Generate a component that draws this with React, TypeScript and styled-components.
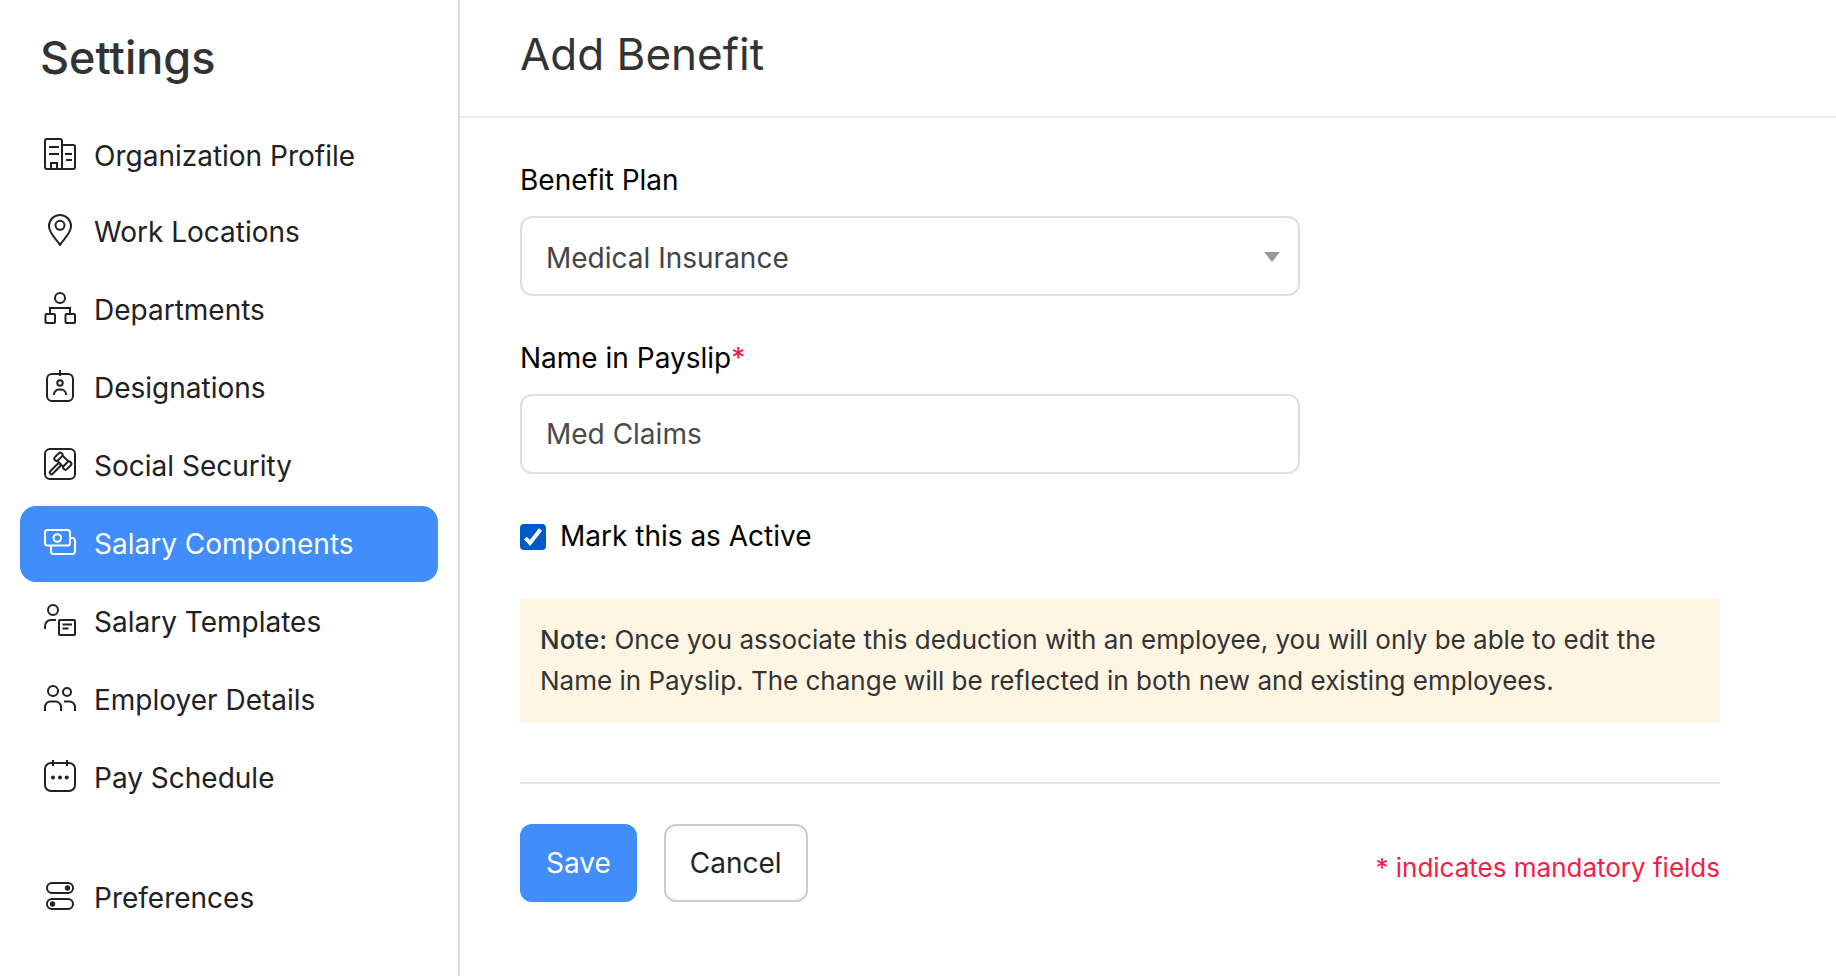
import React, { useState } from "react";
import styled, { createGlobalStyle } from "styled-components";

const GlobalStyle = createGlobalStyle`
  *, *::before, *::after { box-sizing: border-box; }
  body {
    margin: 0;
    background: #fff;
    color: #000;
    font-family: Inter, "Liberation Sans", sans-serif;
    font-size: 28px;
    line-height: 40px;
  }
  button, input, select { font: inherit; }
`;

const Page = styled.div`
  display: flex;
  min-height: 100vh;
`;

const Sidebar = styled.aside`
  flex: 0 0 460px;
  padding: 28px 20px 40px;
  border-right: 2px solid #dcdcdc;
`;

const SidebarTitle = styled.h1`
  margin: 0 0 30px;
  padding: 0 20px;
  color: #333;
  font-size: 45px;
  font-weight: 500;
  line-height: 60px;
`;

const NavList = styled.ul`
  margin: 0;
  padding: 0;
  list-style: none;
`;

const NavItem = styled.li<{ $separated?: boolean }>`
  margin-top: ${(p) => (p.$separated ? 44 : 2)}px;

  &:nth-child(-n + 2) {
    margin-top: 0;
  }
`;

const NavLink = styled.a<{ $active?: boolean }>`
  display: flex;
  align-items: center;
  gap: 18px;
  height: 76px;
  padding: 0 24px;
  border-radius: 16px;
  background: ${(p) => (p.$active ? "#408dfb" : "transparent")};
  color: ${(p) => (p.$active ? "#fff" : "#212121")};
  text-decoration: none;
`;

const Icon = styled.svg`
  flex: none;
  width: 32px;
  height: 32px;
  margin-bottom: 4px;
  fill: none;
  stroke: currentColor;
  stroke-width: 2;
`;

const Main = styled.main`
  flex: 1;
  min-width: 0;
`;

const Header = styled.header`
  padding: 24px 60px 32px;
  border-bottom: 2px solid #ebebeb;
`;

const PageTitle = styled.h2`
  margin: 0;
  color: #333;
  font-size: 44px;
  font-weight: 400;
  line-height: 60px;
`;

const Form = styled.form`
  max-width: 1320px;
  padding: 42px 60px;
`;

const Field = styled.div`
  max-width: 780px;
  margin-bottom: 42px;
`;

const Label = styled.label`
  display: block;
  margin-bottom: 16px;
`;

const Required = styled.span`
  color: #fb1b44;
`;

const SelectWrap = styled.div`
  position: relative;
`;

const Select = styled.select`
  display: block;
  width: 100%;
  height: 80px;
  padding: 4px 60px 0 24px;
  border: 2px solid #dfdfe6;
  border-radius: 12px;
  background: #fff;
  color: #444;
  appearance: none;
`;

const Caret = styled.svg`
  position: absolute;
  top: 36px;
  right: 20px;
  width: 16px;
  height: 10px;
  fill: #999;
  pointer-events: none;
`;

const TextInput = styled.input`
  display: block;
  width: 100%;
  height: 80px;
  padding: 0 24px;
  border: 2px solid #dfdfe6;
  border-radius: 12px;
  background: #fff;
  color: #4a4a4a;
`;

const CheckRow = styled.div`
  display: flex;
  align-items: center;
  gap: 14px;
  margin-bottom: 43px;
`;

const CheckWrap = styled.span`
  position: relative;
  width: 26px;
  height: 26px;
  margin-top: 2px;
`;

const Checkbox = styled.input`
  display: block;
  width: 26px;
  height: 26px;
  margin: 0;
  border: 2px solid #767676;
  border-radius: 4px;
  appearance: none;

  &:checked {
    border-color: #0059c9;
    background: #0059c9;
  }

  &:not(:checked) + svg {
    display: none;
  }
`;

const CheckMark = styled.svg`
  position: absolute;
  inset: 0;
  width: 26px;
  height: 26px;
  fill: none;
  stroke: #fff;
  stroke-width: 4;
  pointer-events: none;
`;

const Note = styled.p`
  margin: 0 0 60px;
  padding: 20px 20px 21px;
  background: #fff5e3;
  color: #333;
  font-size: 26px;
  line-height: 41px;

  strong {
    font-weight: 500;
  }
`;

const Footer = styled.div`
  display: flex;
  align-items: center;
  gap: 27px;
  padding-top: 40px;
  border-top: 2px solid #e5e5e5;
`;

const Button = styled.button<{ $primary?: boolean }>`
  height: 78px;
  padding: 0 24px;
  border: 2px solid ${(p) => (p.$primary ? "#408dfb" : "#ccc")};
  border-radius: 12px;
  background: ${(p) => (p.$primary ? "#408dfb" : "#fff")};
  color: ${(p) => (p.$primary ? "#fff" : "#212529")};
  cursor: pointer;
`;

const MandatoryHint = styled.span`
  margin-left: auto;
  padding-top: 10px;
  color: #fb1b44;
  font-size: 26px;
`;

type Item = { label: string; icon: React.ReactNode; separated?: boolean };

const items: Item[] = [
  {
    label: "Organization Profile",
    icon: (
      <path d="M18 31V3a2 2 0 0 0-2-2H3a2 2 0 0 0-2 2v26a2 2 0 0 0 2 2h26a2 2 0 0 0 2-2V9a2 2 0 0 0-2-2H18M5 9h10M5 16h10M21 16h7M22 22h6M7 31v-6h6v6" />
    ),
  },
  {
    label: "Work Locations",
    icon: (
      <>
        <path d="M16 31C13.500 26 5 20 5 12a11 11 0 0 1 22 0c0 8-8.500 14-11 19z" strokeLinejoin="round" />
        <circle cx="16" cy="11.300" r="4.500" />
      </>
    ),
  },
  {
    label: "Departments",
    icon: (
      <>
        <circle cx="16" cy="6" r="5" />
        <path d="M6 22v-6h20v6" />
        <rect x="1.500" y="22" width="9.500" height="9" rx="1" />
        <rect x="21.500" y="22" width="9.500" height="9" rx="1" />
      </>
    ),
  },
  {
    label: "Designations",
    icon: (
      <>
        <rect x="3" y="4" width="26" height="27" rx="5" />
        <path d="M16 0v6M10 25v-.5a5 5 0 0 1 5-5h2a5 5 0 0 1 5 5v.5" />
        <circle cx="16" cy="13" r="2.700" />
      </>
    ),
  },
  {
    label: "Social Security",
    icon: (
      <>
        <rect x="1" y="1" width="30" height="30" rx="5" />
        <g transform="rotate(45 19 13)">
          <rect x="10.500" y="8.500" width="4.500" height="9.500" rx="2" />
          <rect x="23" y="8.500" width="4.500" height="9.500" rx="2" />
          <path d="M15 9.500H23M15 17H23" />
          <rect x="17.300" y="17" width="3.400" height="14" rx="1.700" />
        </g>
      </>
    ),
  },
  {
    label: "Salary Components",
    icon: (
      <>
        <rect x="1" y="4" width="25" height="15.500" rx="2.500" />
        <circle cx="13.300" cy="12" r="3.800" />
        <path d="M26 12h2.500a2.500 2.500 0 0 1 2.500 2.500v11a2.500 2.500 0 0 1-2.500 2.500h-19A2.500 2.500 0 0 1 7 25.500v-6" />
      </>
    ),
  },
  {
    label: "Salary Templates",
    icon: (
      <>
        <circle cx="9" cy="6" r="5" />
        <path d="M1 25v-3a6 6 0 0 1 6-6h5M18.500 20.500H28M18.500 24.500H24.500" />
        <rect x="15" y="16" width="16" height="15" rx="1" />
      </>
    ),
  },
  {
    label: "Employer Details",
    icon: (
      <>
        <circle cx="9" cy="9" r="5" />
        <circle cx="23" cy="10" r="4" />
        <path d="M1 29v-4a5.500 5.500 0 0 1 5.500-5.500h5A5.500 5.500 0 0 1 17 25v4M20 19.500h5.500A5.500 5.500 0 0 1 31 25v4" />
      </>
    ),
  },
  {
    label: "Pay Schedule",
    icon: (
      <>
        <rect x="1" y="3" width="30" height="28" rx="6" />
        <path d="M9 0v6M23 0v6" />
        <g fill="currentColor" stroke="none">
          <circle cx="9" cy="17.500" r="2" />
          <circle cx="16" cy="17.500" r="2" />
          <circle cx="22.700" cy="17.500" r="2" />
        </g>
      </>
    ),
  },
  {
    label: "Preferences",
    separated: true,
    icon: (
      <>
        <rect x="3" y="3" width="26" height="10" rx="5" />
        <rect x="3" y="19" width="26" height="10" rx="5" />
        <g fill="currentColor" stroke="none">
          <circle cx="23.500" cy="8" r="2.700" />
          <circle cx="8.500" cy="24" r="2.700" />
        </g>
      </>
    ),
  },
];

export default function App() {
  const [plan, setPlan] = useState("Medical Insurance");
  const [name, setName] = useState("Med Claims");
  const [active, setActive] = useState(true);

  return (
    <>
      <GlobalStyle />
      <Page>
        <Sidebar>
          <SidebarTitle>Settings</SidebarTitle>
          <nav aria-label="Settings">
            <NavList>
              {items.map(({ label, icon, separated }) => {
                const current = label === "Salary Components";
                return (
                  <NavItem key={label} $separated={separated}>
                    <NavLink href="#" $active={current} aria-current={current ? "page" : undefined}>
                      <Icon viewBox="0 0 32 32" aria-hidden="true">
                        {icon}
                      </Icon>
                      {label}
                    </NavLink>
                  </NavItem>
                );
              })}
            </NavList>
          </nav>
        </Sidebar>
        <Main>
          <Header>
            <PageTitle>Add Benefit</PageTitle>
          </Header>
          <Form onSubmit={(e) => e.preventDefault()}>
            <Field>
              <Label htmlFor="plan">Benefit Plan</Label>
              <SelectWrap>
                <Select id="plan" value={plan} onChange={(e) => setPlan(e.target.value)}>
                  <option>Medical Insurance</option>
                </Select>
                <Caret viewBox="0 0 16 10" aria-hidden="true">
                  <path d="M0 0h16L8 10z" />
                </Caret>
              </SelectWrap>
            </Field>
            <Field>
              <Label htmlFor="payslip-name">
                Name in Payslip<Required>*</Required>
              </Label>
              <TextInput
                id="payslip-name"
                type="text"
                required
                value={name}
                onChange={(e) => setName(e.target.value)}
              />
            </Field>
            <CheckRow>
              <CheckWrap>
                <Checkbox
                  id="active"
                  type="checkbox"
                  checked={active}
                  onChange={(e) => setActive(e.target.checked)}
                />
                <CheckMark viewBox="0 0 26 26" aria-hidden="true">
                  <path d="M5.500 14l4.500 5L20.500 5.500" />
                </CheckMark>
              </CheckWrap>
              <label htmlFor="active">Mark this as Active</label>
            </CheckRow>
            <Note>
              <strong>Note:</strong> Once you associate this deduction with an employee, you will only be able to
              edit the Name in Payslip. The change will be reflected in both new and existing employees.
            </Note>
            <Footer>
              <Button type="submit" $primary>
                Save
              </Button>
              <Button type="button">Cancel</Button>
              <MandatoryHint>* indicates mandatory fields</MandatoryHint>
            </Footer>
          </Form>
        </Main>
      </Page>
    </>
  );
}
